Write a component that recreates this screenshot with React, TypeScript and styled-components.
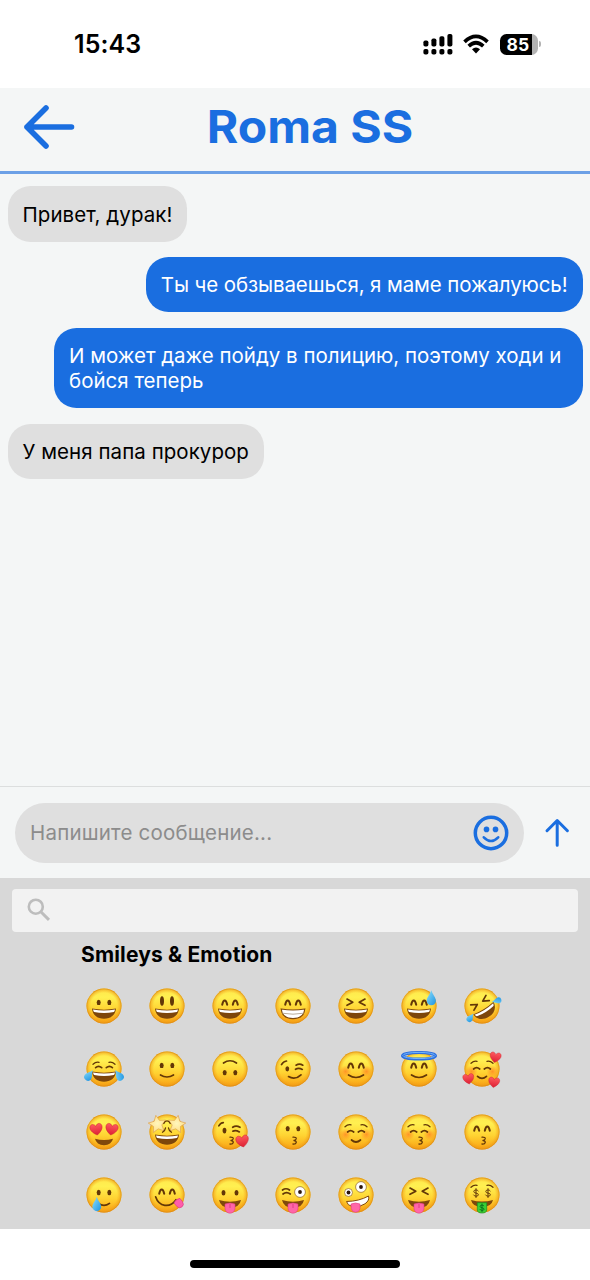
import React from "react";
import styled, { createGlobalStyle } from "styled-components";

const BLUE = "#1a6ee0";
const INK = "#633707";

const GlobalStyle = createGlobalStyle`
  * { box-sizing: border-box; }
  body { margin: 0; background: #fff; font-family: Inter, "Liberation Sans", sans-serif; }
`;

const Screen = styled.div`
  width: 590px;
  height: 1280px;
  display: flex;
  flex-direction: column;
  background: #f4f6f6;
  overflow: hidden;
`;

const StatusBar = styled.header`
  height: 88px;
  flex: none;
  display: flex;
  align-items: center;
  justify-content: space-between;
  padding: 0 49px 0 74px;
  background: #fff;
`;

const Clock = styled.time`
  font-size: 25px;
  line-height: 30px;
  font-weight: 600;
  letter-spacing: 0.1px;
  color: #000;
`;

const StatusIcons = styled.div`
  display: flex;
  align-items: center;
  gap: 10.5px;
`;

const Battery = styled.div`
  display: flex;
  align-items: center;
  gap: 1.3px;
`;

const BatteryBody = styled.div`
  width: 38px;
  height: 21px;
  border-radius: 6.5px;
  background: linear-gradient(90deg, #000 32.5px, #b3b3b3 32.5px);
  color: #fff;
  font-size: 17.5px;
  font-weight: 700;
  line-height: 21px;
  padding-left: 6.8px;
`;

const BatteryTip = styled.div`
  width: 2px;
  height: 6px;
  border-radius: 0 3px 3px 0;
  background: #b3b3b3;
`;

const ChatHeader = styled.div`
  height: 86px;
  flex: none;
  display: grid;
  grid-template-columns: 98px 1fr 68px;
  align-items: center;
  border-bottom: 3px solid #6ca0e6;
  padding-bottom: 5px;
`;

const BackButton = styled.button`
  display: flex;
  border: 0;
  background: none;
  padding: 0 0 0 22px;
  height: 52px;
`;

const Title = styled.h1`
  margin: 0;
  text-align: center;
  color: ${BLUE};
  font-size: 45px;
  line-height: 56px;
  font-weight: 700;
  transform: scaleX(1.068);
`;

const Messages = styled.main`
  height: 612px;
  flex: none;
  display: flex;
  flex-direction: column;
  gap: 15.4px;
  padding: 12.4px 7.5px 0;
`;

const Bubble = styled.div<{ $mine?: boolean; $spacing?: string }>`
  align-self: ${(p) => (p.$mine ? "flex-end" : "flex-start")};
  max-width: 528.5px;
  padding: 15.2px 15px 14.8px;
  border-radius: 22.5px;
  background: ${(p) => (p.$mine ? BLUE : "#dfdfdf")};
  color: ${(p) => (p.$mine ? "#fff" : "#000")};
  font-size: 20.5px;
  line-height: 25.3px;
  letter-spacing: ${(p) => p.$spacing ?? "0"};
`;

const Composer = styled.div`
  height: 91.5px;
  flex: none;
  display: flex;
  align-items: center;
  gap: 18px;
  padding: 1px 18px 0 15px;
  border-top: 1.5px solid #dcdede;
`;

const MessageField = styled.div`
  width: 509px;
  height: 60px;
  border-radius: 30px;
  background: #dfdfdf;
  display: flex;
  align-items: center;
  justify-content: space-between;
  padding: 0 15px;
`;

const Placeholder = styled.span`
  color: #8c8c8c;
  font-size: 20.5px;
  line-height: 26px;
  letter-spacing: 0.2px;
`;

const EmojiPanel = styled.section`
  height: 351px;
  flex: none;
  background: #d8d8d8;
  padding: 11.5px 12px 0;
`;

const SearchField = styled.div`
  height: 42.5px;
  border-radius: 4px;
  background: #f2f2f2;
  display: flex;
  align-items: center;
  padding-left: 15px;
`;

const GroupTitle = styled.h2`
  margin: 0;
  padding: 10px 0 0 69px;
  height: 43px;
  font-size: 21px;
  line-height: 26px;
  font-weight: 700;
  letter-spacing: 0.15px;
  color: #000;
`;

const EmojiGrid = styled.div`
  margin-left: 60.4px;
  display: grid;
  grid-template-columns: repeat(7, 63px);
  grid-auto-rows: 63px;
  place-items: center;
`;

const EmojiSvg = styled.svg`
  display: block;
  overflow: visible;
`;

const BottomArea = styled.footer`
  flex: 1;
  background: #fff;
  display: flex;
  justify-content: center;
  align-items: flex-end;
  padding-bottom: 12px;
`;

const HomeIndicator = styled.div`
  width: 210px;
  height: 8px;
  border-radius: 4px;
  background: #000;
`;

const line = { fill: "none", stroke: INK, strokeWidth: 1.7, strokeLinecap: "round" as const, strokeLinejoin: "round" as const };

const Dots = ({ x = 5.3, y = -3.6, rx = 2, ry = 2.7 }) => (
  <g fill={INK}>
    <ellipse cx={-x} cy={y} rx={rx} ry={ry} />
    <ellipse cx={x} cy={y} rx={rx} ry={ry} />
  </g>
);

const Arches = () => (
  <path {...line} strokeWidth={2} d="M-7.8-1.2Q-7-5.6-5.3-5.6T-2.8-1.2M2.8-1.2Q3.6-5.6 5.3-5.6T7.8-1.2" />
);

const Closed = ({ y = 0 }) => (
  <path {...line} transform={`translate(0 ${y})`} d="M-8.4 0Q-5.5-2.6-2.3 0M2.3 0Q5.5-2.6 8.4 0" />
);

const Brows = ({ y = 0 }) => (
  <path {...line} strokeWidth={1.3} transform={`translate(0 ${y})`} d="M-11-5.8Q-8.2-8.4-5-7.7M5-7.7Q8.2-8.4 11-5.8" />
);

const Squeezed = () => (
  <path {...line} d="M-9-6.9L-3.2-3.8L-9-.7M9-6.9L3.2-3.8L9-.7" />
);

const OpenMouth = () => (
  <g>
    <path d="M-12 2.6Q0 4.8 12 2.6C11.4 9.4 6.5 12.8 0 12.8S-11.4 9.4-12 2.6Z" fill="#7d460b" />
    <path d="M-11 3.5Q0 5.5 11 3.5Q10.6 5.5 9.8 6Q0 8-9.8 6Q-10.6 5.5-11 3.5Z" fill="#fff" />
  </g>
);

const Grin = () => (
  <g>
    <path d="M-11.8 3Q0 5 11.8 3C11.2 9.3 6.5 12.6 0 12.6S-11.2 9.3-11.8 3Z" fill="#fff" stroke="#80480c" strokeWidth={1.1} />
    <path d="M-10.8 7.2Q0 9.2 10.8 7.2" fill="none" stroke="#a89880" strokeWidth={0.8} />
  </g>
);

const Smile = ({ y = 0, w = 6.5, d = 4 }) => (
  <path {...line} d={`M${-w} ${6 + y}Q0 ${6 + y + d} ${w} ${6 + y}`} />
);

const Kiss = ({ x = 0 }) => (
  <path {...line} strokeWidth={1.3} transform={`translate(${x} 0)`} d="M-1.6 5.2Q2 5 1.6 6.9Q1.2 8.2-.6 8.5Q2 8.8 1.6 10.6Q1.2 12.3-1.6 12" />
);

const Blush = () => (
  <g fill="url(#blush)">
    <circle cx={-10.5} cy={2.5} r={6} />
    <circle cx={10.5} cy={2.5} r={6} />
  </g>
);

const Heart = ({ x, y, s = 1, r = 0 }: { x: number; y: number; s?: number; r?: number }) => (
  <path
    transform={`translate(${x} ${y}) rotate(${r}) scale(${s})`}
    d="M0 5.5C-8 .5-5.8-5-2.5-4.5Q-.8-4.2 0-2.4Q.8-4.2 2.5-4.5C5.8-5 8 .5 0 5.5Z"
    fill="url(#heart)"
    stroke="#ca202c"
    strokeWidth={0.4}
  />
);

const Drop = ({ x, y, r = 0, s = 1 }: { x: number; y: number; r?: number; s?: number }) => (
  <path
    transform={`translate(${x} ${y}) rotate(${r}) scale(${s})`}
    d="M0-7C1.2-3 4.2-.5 4.2 2.4A4.2 4.2 0 0 1-4.2 2.4C-4.2-.5-1.2-3 0-7Z"
    fill="url(#water)"
  />
);

const TongueMouth = () => (
  <g>
    <path d="M-11 5Q0 8.6 11 5Q9.5 12.6 0 13Q-9.5 12.6-11 5Z" fill="#80480c" />
    <path d="M-5 9.1Q0 6.9 5 9.1V13.2A5 5 0 0 1-5 13.2Z" fill="#ff66a8" stroke="#e33b82" strokeWidth={0.6} />
    <path d="M0 9V13" stroke="#d93279" strokeWidth={0.8} />
  </g>
);

const Star = ({ x, r }: { x: number; r: number }) => (
  <path
    transform={`translate(${x} -7.8) rotate(${r})`}
    d="M0-9L2.7-3.4L8.8-2.7L4.2 1.6L5.4 7.6L0 4.7L-5.4 7.6L-4.2 1.6L-8.8-2.7L-2.7-3.4Z"
    fill="url(#star)"
    stroke="#dda659"
    strokeWidth={0.7}
    strokeLinejoin="round"
  />
);

const Eyeball = ({ x, y, r }: { x: number; y: number; r: number }) => (
  <g>
    <circle cx={x} cy={y} r={r} fill="#fff" stroke="#9a7130" strokeWidth={0.8} />
    <circle cx={x} cy={y} r={1.9} fill="#2c160a" />
  </g>
);

const Dollar = ({ x, y, s = 1, c = INK }: { x: number; y: number; s?: number; c?: string }) => (
  <path
    transform={`translate(${x} ${y}) scale(${s})`}
    d="M2.2-2.1Q1.5-3.1 0-3.1Q-2.2-3-2.2-1.5Q-2 0 0 .1Q2.4.4 2.4 1.8Q2.2 3.2 0 3.2Q-1.8 3.1-2.4 2M0-4.4V4.5"
    fill="none"
    stroke={c}
    strokeWidth={1}
    strokeLinecap="round"
  />
);

const faces: { name: string; art: React.ReactNode }[] = [
  { name: "grinning", art: <><Dots /><OpenMouth /></> },
  { name: "smiley", art: <><Dots x={5} y={-5} ry={4.7} /><OpenMouth /></> },
  { name: "smile", art: <><Arches /><OpenMouth /></> },
  { name: "grin", art: <><Arches /><Grin /></> },
  { name: "laughing", art: <><Squeezed /><OpenMouth /></> },
  { name: "sweat smile", art: <><Arches /><OpenMouth /><Drop x={12.3} y={-8} s={1.1} /></> },
  {
    name: "rolling laughter",
    art: (
      <>
        <g transform="rotate(-32)"><Squeezed /><OpenMouth /></g>
        <Drop x={14.7} y={-5.2} r={-105} s={0.72} />
        <Drop x={-11.5} y={11.7} r={35} s={0.72} />
      </>
    ),
  },
  {
    name: "joy",
    art: (
      <>
        <Brows y={1} /><Closed y={-1.4} /><OpenMouth />
        <Drop x={-14.8} y={6.2} r={35} s={0.9} /><Drop x={14.8} y={6.2} r={-35} s={0.9} />
      </>
    ),
  },
  { name: "slight smile", art: <><Dots /><Smile /></> },
  { name: "upside down", art: <g transform="rotate(180)"><Dots /><Smile d={4.5} /></g> },
  {
    name: "wink",
    art: (
      <>
        <ellipse cx={-5.7} cy={-0.2} rx={1.9} ry={2.6} fill={INK} />
        <path {...line} d="M-11.5-4.4Q-9.8-7.6-6.5-8M2.5 .3Q5.5-1.6 9.3 .4M3-3.8Q6.5-5.8 9.8-3.8M-4.5 7.6Q2 11.5 8 5.8" />
      </>
    ),
  },
  { name: "blush", art: <><Blush /><Arches /><Smile w={7.5} d={5} /></> },
  {
    name: "innocent",
    art: (
      <>
        <Arches /><Smile w={7.5} d={5} />
        <ellipse cx={0} cy={-13.2} rx={16.5} ry={3.3} fill="none" stroke="#2d6fe0" strokeWidth={3} />
        <ellipse cx={0} cy={-13.5} rx={16.2} ry={3.1} fill="none" stroke="#72b5fa" strokeWidth={1} />
      </>
    ),
  },
  {
    name: "in love",
    art: (
      <>
        <Blush /><Brows /><Closed /><Smile y={1.4} w={4.5} />
        <Heart x={13.4} y={-12} r={10} /><Heart x={-13.5} y={9.5} r={-8} /><Heart x={12} y={13} r={8} />
      </>
    ),
  },
  {
    name: "heart eyes",
    art: (
      <>
        <path d="M-9 6.8Q0 9.3 9 6.8Q7.5 13 0 13.2Q-7.5 13-9 6.8Z" fill="#80480c" />
        <Heart x={-7.7} y={-3} s={1.12} r={-10} /><Heart x={7.7} y={-3} s={1.12} r={10} />
      </>
    ),
  },
  {
    name: "star struck",
    art: (
      <>
        <OpenMouth /><Star x={-9.6} r={-10} /><Star x={9.6} r={10} />
        <path {...line} strokeWidth={1.3} d="M-3.2-8.5Q-2-11.2 0-11.2Q2-11.2 3.2-8.5M-4.5 .2Q-1.8-1.4-1.5-4M4.5 .2Q1.8-1.4 1.5-4" />
      </>
    ),
  },
  {
    name: "blowing kiss",
    art: (
      <>
        <ellipse cx={-5.5} cy={-1.4} rx={1.9} ry={2.8} fill={INK} />
        <path {...line} d="M-11.2-6.2Q-9.5-9.2-6.7-9.4M2.8-.8Q5.5-2.3 9.4-.1M2.7-4.7Q6-7 10-4.7" />
        <Kiss x={1.6} /><Heart x={12.4} y={8.8} s={1.15} r={-10} />
      </>
    ),
  },
  { name: "kissing", art: <><Dots y={-3.4} /><Kiss x={1.6} /></> },
  { name: "relaxed", art: <><Blush /><Brows y={.5} /><Closed /><Smile y={2} w={4.5} /></> },
  { name: "kissing closed eyes", art: <><Blush /><Brows y={.5} /><Closed /><Kiss x={1.6} /></> },
  { name: "kissing smile", art: <><Arches /><Kiss x={1.6} /></> },
  { name: "smiling with tear", art: <><Dots y={-2.5} /><Smile y={2.4} w={5.5} /><Drop x={-7.2} y={9.2} s={1.05} /></> },
  {
    name: "yum",
    art: (
      <>
        <Arches /><path {...line} d="M-11.4 1.8C-8 12 3 13.4 9 4.7" />
        <path transform="translate(11.8 8) rotate(-38)" d="M-3.7-3Q0-5 3.7-3V1.2Q3.5 5 0 5T-3.7 1.2Z" fill="#ff5dab" stroke="#db397f" strokeWidth={0.6} />
      </>
    ),
  },
  { name: "tongue", art: <><Dots x={6.5} y={-2.2} /><TongueMouth /></> },
  {
    name: "winking tongue",
    art: <><path {...line} d="M-10-1Q-6.5-3.8-2.7-1M-10.5-5Q-7-7.5-3.5-5" /><TongueMouth /><Eyeball x={7} y={-3} r={5.4} /></>,
  },
  {
    name: "zany",
    art: (
      <>
        <path d="M-9.5 6.5Q3 6.3 12.5 1Q14 5.2 9 8.8Q3.5 13-4 11.4Q-8.5 10.5-9.5 6.5Z" fill="#fff" stroke="#80480c" strokeWidth={1} />
        <path d="M-5 9Q-.5 7 4 9V13.5A4.4 4.4 0 0 1-4.7 13.5Z" fill="#ff66a8" stroke="#e33b82" strokeWidth={0.6} />
        <Eyeball x={-7.5} y={-2.5} r={4} /><Eyeball x={5} y={-8} r={5.4} />
      </>
    ),
  },
  { name: "squinting tongue", art: <><Squeezed /><TongueMouth /></> },
  {
    name: "money mouth",
    art: (
      <>
        <Brows y={-2} /><Dollar x={-6} y={-2} /><Dollar x={6} y={-2} />
        <path d="M-11 5Q0 8 11 5Q9.5 12 0 12Q-9.5 12-11 5Z" fill="#80480c" />
        <path d="M-4.7 7.7H4.7V15Q4.5 18 0 18T-4.7 15Z" fill="#39cf35" stroke="#189424" strokeWidth={0.7} />
        <Dollar x={0} y={12.7} s={0.85} c="#07631a" />
      </>
    ),
  },
];

const Emoji = ({ name, children }: { name: string; children: React.ReactNode }) => (
  <EmojiSvg width={36} height={36} viewBox="-18 -18 36 36" role="img" aria-label={name}>
    <circle r={17.5} fill="url(#face)" />
    <circle r={17.5} fill="url(#rim)" />
    {children}
  </EmojiSvg>
);

const EmojiPaints = () => (
  <defs>
    <linearGradient id="face" x1="0" y1="0" x2="0" y2="1">
      <stop offset="0" stopColor="#ffe64a" />
      <stop offset=".25" stopColor="#fff051" />
      <stop offset=".6" stopColor="#ffd332" />
      <stop offset="1" stopColor="#f9a012" />
    </linearGradient>
    <radialGradient id="rim">
      <stop offset=".75" stopColor="#f4a11c" stopOpacity="0" />
      <stop offset=".92" stopColor="#ec9a18" stopOpacity=".5" />
      <stop offset="1" stopColor="#d9840e" stopOpacity=".95" />
    </radialGradient>
    <radialGradient id="blush">
      <stop offset="0" stopColor="#ff6a1e" stopOpacity=".6" />
      <stop offset="1" stopColor="#ff6a1e" stopOpacity="0" />
    </radialGradient>
    <radialGradient id="star">
      <stop offset="0" stopColor="#fff6bd" />
      <stop offset="1" stopColor="#ffe08a" />
    </radialGradient>
    <linearGradient id="heart" x1="0" y1="0" x2="0" y2="1">
      <stop offset="0" stopColor="#ff5b5e" />
      <stop offset="1" stopColor="#dc1f35" />
    </linearGradient>
    <linearGradient id="water" x1="0" y1="0" x2="1" y2="1">
      <stop offset="0" stopColor="#8fe0fb" />
      <stop offset="1" stopColor="#1c93e2" />
    </linearGradient>
  </defs>
);

const Signal = () => (
  <svg width="30" height="21" viewBox="0 0 30 21">
    {[6.5, 4.5, 2.3, 0].map((top, i) => (
      <g key={top}>
        <rect x={0.4 + i * 8} y={top} width="5" height={12.6 - top} rx="1.8" />
        <rect x={0.4 + i * 8} y="15" width="5" height="5.6" rx="1.8" />
      </g>
    ))}
  </svg>
);

const Wifi = () => (
  <svg width="26" height="20" viewBox="0 0 26 20">
    <g fill="none" stroke="#000" strokeWidth="3.7">
      <path d="M1.5 7.8Q13-3 24.5 7.8" />
      <path d="M5.7 12.2Q13 5.4 20.3 12.2" />
    </g>
    <path d="M9 15.3Q13 11.8 17 15.3L13 19.4Z" />
  </svg>
);

const messages = [
  { text: "Привет, дурак!", mine: false, spacing: "0.06px" },
  { text: "Ты че обзываешься, я маме пожалуюсь!", mine: true, spacing: "-0.11px" },
  { text: "И может даже пойду в полицию, поэтому ходи и бойся теперь", mine: true },
  { text: "У меня папа прокурор", mine: false, spacing: "0.05px" },
];

export default function App() {
  return (
    <Screen>
      <GlobalStyle />
      <StatusBar>
        <Clock>15:43</Clock>
        <StatusIcons>
          <Signal />
          <Wifi />
          <Battery>
            <BatteryBody>85</BatteryBody>
            <BatteryTip />
          </Battery>
        </StatusIcons>
      </StatusBar>
      <ChatHeader>
        <BackButton aria-label="Назад">
          <svg width="54" height="52" viewBox="0 0 54 52" fill="none" stroke={BLUE} strokeWidth="5.6" strokeLinecap="round" strokeLinejoin="round">
            <path d="M24 7L5 26L24 45M5 26H49.5" />
          </svg>
        </BackButton>
        <Title>Roma SS</Title>
      </ChatHeader>
      <Messages>
        {messages.map((m) => (
          <Bubble key={m.text} $mine={m.mine} $spacing={m.spacing}>{m.text}</Bubble>
        ))}
      </Messages>
      <Composer>
        <MessageField>
          <Placeholder>Напишите сообщение...</Placeholder>
          <svg width="36" height="36" viewBox="-18 -18 36 36" fill="none" stroke={BLUE} strokeLinecap="round">
            <circle r="15.7" strokeWidth="3.5" />
            <path d="M-7.2 4.3Q0 11.8 7.2 4.3" strokeWidth="2.6" />
            <g fill={BLUE} stroke="none">
              <circle cx="-4.5" cy="-3.6" r="2.8" />
              <circle cx="4.5" cy="-3.6" r="2.8" />
            </g>
          </svg>
        </MessageField>
        <svg width="30" height="32" viewBox="0 0 30 32" fill="none" stroke={BLUE} strokeWidth="3" strokeLinecap="round" strokeLinejoin="round">
          <path d="M15.2 28.2V3.5M5 13.7L15.2 3.5L25.4 13.7" />
        </svg>
      </Composer>
      <EmojiPanel>
        <SearchField>
          <svg width="24" height="24" viewBox="0 0 24 24" fill="none" stroke="#bdbdbd" strokeWidth="2.6">
            <circle cx="8.8" cy="8.7" r="7" />
            <path d="M13.8 13.7L22 21.9" strokeWidth="3" />
          </svg>
        </SearchField>
        <GroupTitle>Smileys &amp; Emotion</GroupTitle>
        <EmojiGrid>
          {faces.map((f) => (
            <Emoji key={f.name} name={f.name}>{f.art}</Emoji>
          ))}
        </EmojiGrid>
        <svg width="0" height="0"><EmojiPaints /></svg>
      </EmojiPanel>
      <BottomArea>
        <HomeIndicator />
      </BottomArea>
    </Screen>
  );
}
